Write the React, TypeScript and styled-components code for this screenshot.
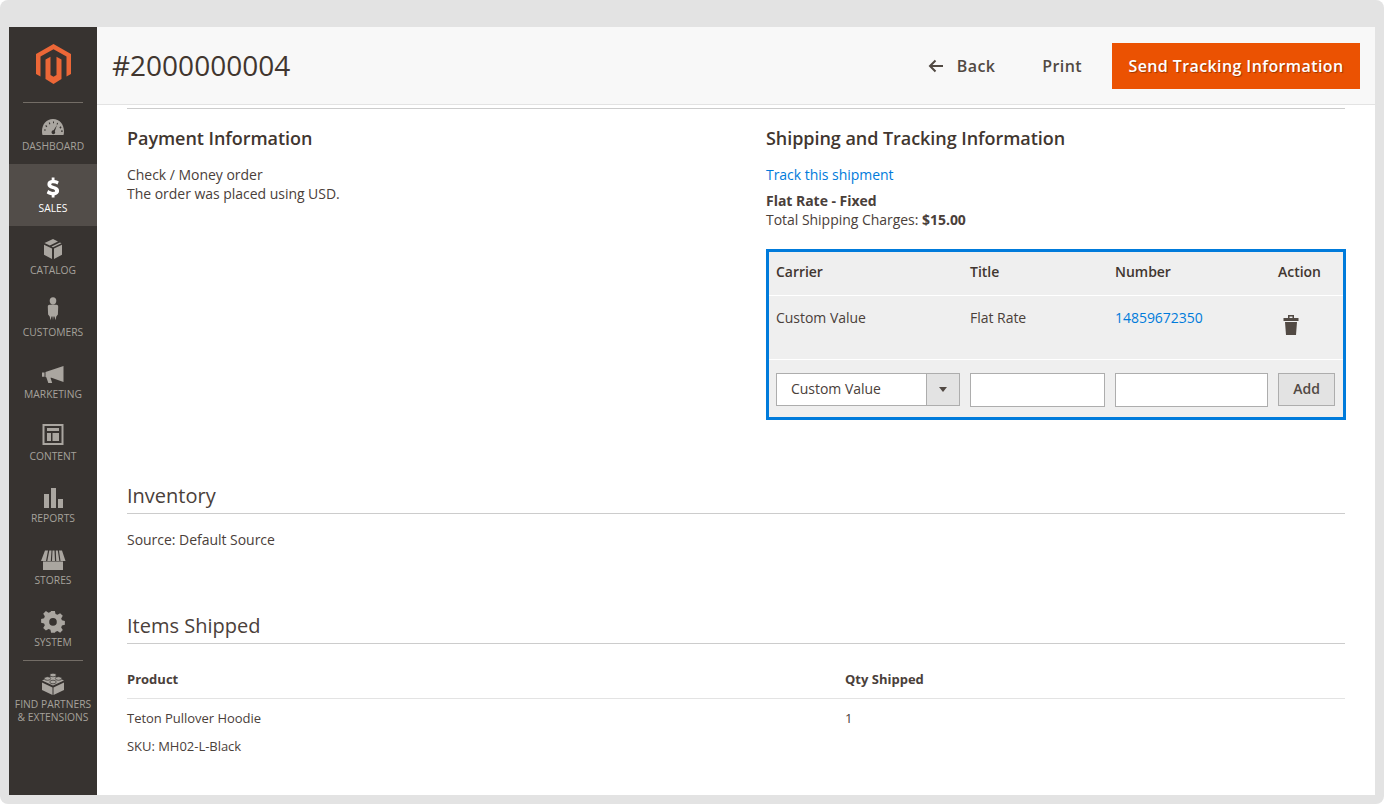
import React from 'react';
import styled, { createGlobalStyle } from 'styled-components';

const GlobalStyle = createGlobalStyle`
  html, body {
    margin: 0;
    padding: 0;
    height: 804px;
    overflow: hidden;
    background: #ffffff;
  }
  * {
    box-sizing: border-box;
  }
`;

const Frame = styled.div`
  width: 1384px;
  height: 804px;
  padding: 27px 9px 9px;
  background: #e3e3e3;
  border-radius: 8px;
  font-family: "Open Sans", "Liberation Sans", sans-serif;
  font-size: 14px;
  letter-spacing: -0.03px;
  color: #4a403a;
`;

const Window = styled.div`
  display: flex;
  height: 768px;
  background: #ffffff;
  overflow: hidden;
`;

const Sidebar = styled.nav`
  flex: 0 0 88px;
  background: #373330;
  display: flex;
  flex-direction: column;
`;

const LogoBox = styled.div`
  height: 75px;
  padding-top: 17px;
  display: flex;
  justify-content: center;
`;

const Divider = styled.div`
  height: 1px;
  margin: 0 14px -1px;
  background: #736d66;
  flex: none;
  position: relative;
`;

const MenuItem = styled.a<{ $active?: boolean }>`
  height: 62px;
  flex: none;
  display: flex;
  flex-direction: column;
  align-items: center;
  padding-top: 10px;
  background: ${(p) => (p.$active ? '#524d49' : 'transparent')};
  color: ${(p) => (p.$active ? '#ffffff' : '#a5a19b')};
  font-size: 10.3px;
  font-weight: 400;
  letter-spacing: 0;
  line-height: 13px;
  text-align: center;
  text-transform: uppercase;
  white-space: nowrap;
`;

const MenuIcon = styled.svg`
  width: 26px;
  height: 24px;
  margin-bottom: 4px;
  fill: #aaa6a0;
  flex: none;
  overflow: visible;
`;

const SalesIcon = styled(MenuIcon)`
  fill: #ffffff;
`;

const Main = styled.div`
  flex: 1;
  display: flex;
  flex-direction: column;
  min-width: 0;
`;

const Header = styled.header`
  height: 78px;
  flex: none;
  background: #f8f8f8;
  border-bottom: 1px solid #e3e3e3;
  display: flex;
  align-items: center;
  padding: 1px 15px 0;
`;

const PageTitle = styled.h1`
  margin: 0 0 2px;
  flex: 1;
  font-size: 28px;
  font-weight: 400;
  letter-spacing: 0;
  line-height: 36px;
  color: #41362f;
`;

const ActionButton = styled.button`
  border: 0;
  background: none;
  padding: 0;
  display: flex;
  align-items: center;
  font-family: inherit;
  font-size: 16px;
  font-weight: 600;
  letter-spacing: 0.4px;
  color: #514943;
`;

const BackButton = styled(ActionButton)`
  margin-right: 47px;
  gap: 13px;
`;

const PrintButton = styled(ActionButton)`
  margin-right: 30px;
`;

const PrimaryButton = styled(ActionButton)`
  width: 248px;
  height: 46px;
  justify-content: center;
  background: #eb5202;
  color: #ffffff;
  text-shadow: 1px 1px 1px rgba(0, 0, 0, 0.35);
`;

const Content = styled.main`
  padding: 3px 30px 0;
`;

const TopRule = styled.div`
  height: 1px;
  background: #cccccc;
`;

const TwoCols = styled.div`
  display: grid;
  grid-template-columns: 639px 580px;
  padding-top: 17px;
  height: 369px;
`;

const BlockTitle = styled.h3`
  margin: 0 0 15px;
  font-size: 18px;
  font-weight: 600;
  letter-spacing: -0.05px;
  line-height: 24px;
  color: #41362f;
`;

const TextLine = styled.div`
  line-height: 19px;
`;

const TrackLink = styled.a`
  display: block;
  color: #007bdb;
  line-height: 19px;
  margin-bottom: 7px;
`;

const TrackingTable = styled.table`
  width: 580px;
  margin-top: 20px;
  border: 3px solid #007bdb;
  border-collapse: separate;
  border-spacing: 0;
  table-layout: fixed;
  background: #efefef;
`;

const HeadCell = styled.th`
  height: 43px;
  padding: 0 5px 5px;
  font-size: 14px;
  font-weight: 600;
  text-align: left;
  color: #41362f;
  &:first-child {
    padding-left: 7px;
  }
`;

const BodyCell = styled.td`
  height: 64px;
  padding: 12px 5px 0;
  vertical-align: top;
  line-height: 19px;
  border-top: 1px solid #ffffff;
  &:first-child {
    padding-left: 7px;
  }
`;

const FormCell = styled.td`
  height: 58px;
  padding: 13px 5px 0;
  vertical-align: top;
  border-top: 1px solid #ffffff;
  &:first-child {
    padding-left: 7px;
  }
`;

const NumberLink = styled.a`
  color: #007bdb;
`;

const TrashIcon = styled.svg`
  display: block;
  width: 16px;
  height: 20px;
  margin: 7px 0 0 5px;
  fill: #514943;
`;

const SelectBox = styled.div`
  display: flex;
  height: 33px;
  border: 1px solid #adadad;
  background: #ffffff;
`;

const SelectValue = styled.div`
  flex: 1;
  padding-left: 14px;
  line-height: 29px;
`;

const SelectArrow = styled.div`
  width: 33px;
  border-left: 1px solid #adadad;
  background: #e3e3e3;
  display: flex;
  align-items: center;
  justify-content: center;
  &::after {
    content: '';
    border-top: 5px solid #514943;
    border-left: 4px solid transparent;
    border-right: 4px solid transparent;
  }
`;

const TextInput = styled.input`
  display: block;
  width: 100%;
  height: 34px;
  border: 1px solid #adadad;
  background: #ffffff;
  padding: 0 8px;
`;

const AddButton = styled.button`
  display: block;
  width: 57px;
  height: 33px;
  padding: 0 0 2px;
  border: 1px solid #adadad;
  background: #e3e3e3;
  font-family: inherit;
  font-size: 14px;
  font-weight: 600;
  color: #514943;
`;

const SectionTitle = styled.h2`
  margin: 0;
  height: 36px;
  padding-top: 4px;
  border-bottom: 1px solid #cccccc;
  font-size: 20px;
  font-weight: 400;
  letter-spacing: 0;
  line-height: 28px;
  color: #4a403a;
`;

const SourceLine = styled.div`
  margin: 16px 0 59px;
  line-height: 19px;
`;

const ItemsTable = styled.div`
  font-size: 13px;
`;

const ItemsHead = styled.div`
  display: grid;
  grid-template-columns: 718px 1fr;
  height: 55px;
  padding-top: 26px;
  line-height: 18px;
  font-weight: 700;
  letter-spacing: 0;
  border-bottom: 1px solid #e3e3e3;
`;

const ItemsRow = styled.div`
  display: grid;
  grid-template-columns: 718px 1fr;
  padding-top: 10px;
  line-height: 18px;
`;

const Sku = styled.div`
  margin-top: 10px;
`;

const menuItems: { label: string; fit: string; icon: React.ReactNode }[] = [
  {
    label: 'Dashboard',
    fit: 'translate(0 4.800) scale(1 1.100)',
    icon: (
      <path
        fillRule="evenodd"
        d="M13 2C6.500 2 2 7 2 13c0 1.800.2 3 .5 3.500h21c.3-.5.5-1.700.5-3.500C24 7 19.500 2 13 2ZM6 7.500l1.300 1.200-.8.8L5.300 8.400ZM9.600 5l.8 1.500-.9.5-.8-1.500ZM13 4.200h1v1.700h-1ZM17.200 5.300l.9.4-.7 1.500-.9-.4ZM4 11.500h1.800v1H4ZM20.500 8.600l1.100 1-1.200 1.200-1-1ZM21 12.500h1.800v1H21ZM17 7.500l-2.200 5.600c.6.7.5 1.800-.2 2.400-.9.7-2.200.5-2.800-.5-.5-.9-.2-2 .7-2.500.4-.2.7-.2 1.100-.2Z"
      />
    ),
  },
  {
    label: 'Sales',
    fit: 'translate(0 1.500)',
    icon: (
      <path d="M11.700 2h2.800v2.500c1.800.2 3.200.7 4.300 1.400l-1.300 3.200c-1.400-.9-2.900-1.400-4.300-1.400-1.300 0-2 .4-2 1.100 0 .8.900 1.100 2.700 1.600 3.300.9 5.200 2.100 5.200 4.900 0 2.500-1.800 4.200-4.600 4.600V22h-2.800v-2.300c-2-.2-3.800-.9-5-1.900l1.500-3.200c1.400 1.100 3.200 1.800 4.800 1.800 1.300 0 2-.4 2-1.200 0-.8-.8-1.200-2.700-1.700C9.300 12.600 7.400 11.400 7.400 8.700c0-2.300 1.700-3.900 4.300-4.200Z" />
    ),
  },
  {
    label: 'Catalog',
    fit: 'translate(0 1.500)',
    icon: (
      <path d="M13 1.500 18 4 9.800 8 4.500 5.600ZM20 5l1.500.8-8.500 4-1.500-.7ZM4 7.200l8 3.800v10.500l-8-4.200ZM22 7.200v10.100l-8 4.200V11Z" />
    ),
  },
  {
    label: 'Customers',
    fit: 'translate(0 -2.500) scale(1 1.100)',
    icon: (
      <path d="M13 1.500a3.300 3.300 0 1 1 0 6.600 3.300 3.300 0 0 1 0-6.600ZM9.500 8.500h7c1 0 1.700.7 1.700 1.700l-.3 7-1.600 1.800-.8 3.500-1-3.500h-1l-.5 3.500-.5-3.500h-1l-1 3.500-.8-3.500-1.600-1.800-.3-7c0-1 .7-1.700 1.700-1.700Z" />
    ),
  },
  {
    label: 'Marketing',
    fit: 'translate(0 3)',
    icon: (
      <path d="M23.500 3v16l-12-4.300-1 .1 1.700 5.200H8.300L6.300 14.300 5.500 14V9l18-6ZM2 9.500h2.500v4.200H2Z" />
    ),
  },
  {
    label: 'Content',
    fit: '',
    icon: (
      <path
        fillRule="evenodd"
        d="M2.500 2h21v21h-21ZM4.500 4v17h17V4ZM7 6h12v3H7ZM7 11h4v8H7ZM12.500 11H19v8h-6.500Z"
      />
    ),
  },
  {
    label: 'Reports',
    fit: 'translate(0 1)',
    icon: <path d="M4 9h5v14H4ZM11 3h5v20h-5ZM18 14h5v9h-5Z" />,
  },
  {
    label: 'Stores',
    fit: '',
    icon: (
      <path d="M5 4.500h3L6 15H1ZM9.300 4.500h2.200L10.800 15H7.300ZM12.500 4.500h2L15 15h-3ZM15.800 4.500h2l1.600 10.500H16.200ZM19 4.500h3L25.500 15h-5ZM3 15.500h20V24H3Z" />
    ),
  },
  {
    label: 'System',
    fit: 'translate(.65 2) scale(.95)',
    icon: (
      <path
        fillRule="evenodd"
        d="M11 1h4l.7 3.200 2 .8 2.800-1.700 2.800 2.800-1.700 2.800.8 2 3.100.7v4l-3.100.7-.8 2 1.700 2.800-2.800 2.800-2.800-1.700-2 .8L15 24h-4l-.7-3.200-2-.8-2.800 1.700-2.800-2.800 1.700-2.800-.8-2-3.100-.7v-4l3.100-.7.8-2-1.700-2.800 2.800-2.800 2.800 1.700 2-.8ZM13 8.500a4 4 0 1 0 0 8 4 4 0 0 0 0-8Z"
      />
    ),
  },
];

const studs = [
  [13, 5],
  [7.5, 8.5],
  [18.5, 8.5],
  [13, 12],
];

export default function App() {
  return (
    <Frame>
      <GlobalStyle />
      <Window>
        <Sidebar>
          <LogoBox>
            <svg width="35" height="40" viewBox="0 0 35 40" fill="#ec6737">
              <path d="M17.500 0 35 10v20l-4.500 2.600v-20l-13-7.400-13 7.400v20L0 30V10Z" />
              <path d="M9.500 15.500l5-2.700V31l3 1.700 3-1.700V12.800l5 2.700V35l-8 5-8-5Z" />
            </svg>
          </LogoBox>
          <Divider />
          {menuItems.map((item) => {
            const active = item.label === 'Sales';
            const Icon = active ? SalesIcon : MenuIcon;
            return (
              <MenuItem key={item.label} $active={active}>
                <Icon viewBox="0 0 26 24">
                  <g transform={item.fit}>{item.icon}</g>
                </Icon>
                {item.label}
              </MenuItem>
            );
          })}
          <Divider />
          <MenuItem>
            <MenuIcon viewBox="0 0 26 24">
              <path d="M13 5.500 24 10.500 13 15.500 2 10.500ZM2 12.500l10.500 5V25L2 20ZM24 12.500l-10.500 5V25L24 20Z" />
              {studs.map(([cx, cy]) => (
                <ellipse key={`${cx}-${cy}`} cx={cx} cy={cy} rx="3.200" ry="1.800" stroke="#373330" strokeWidth=".7" />
              ))}
            </MenuIcon>
            Find Partners
            <br />& Extensions
          </MenuItem>
        </Sidebar>
        <Main>
          <Header>
            <PageTitle>#2000000004</PageTitle>
            <BackButton>
              <svg width="16" height="14" viewBox="0 0 16 14" fill="none" stroke="#514943" strokeWidth="2">
                <path d="M15 7H2M7.500 1.500 2 7l5.500 5.500" />
              </svg>
              Back
            </BackButton>
            <PrintButton>Print</PrintButton>
            <PrimaryButton>Send Tracking Information</PrimaryButton>
          </Header>
          <Content>
            <TopRule />
            <TwoCols>
              <div>
                <BlockTitle>Payment Information</BlockTitle>
                <TextLine>Check / Money order</TextLine>
                <TextLine>The order was placed using USD.</TextLine>
              </div>
              <div>
                <BlockTitle>Shipping and Tracking Information</BlockTitle>
                <TrackLink>Track this shipment</TrackLink>
                <TextLine>
                  <strong>Flat Rate - Fixed</strong>
                </TextLine>
                <TextLine>
                  Total Shipping Charges: <strong>$15.00</strong>
                </TextLine>
                <TrackingTable>
                  <colgroup>
                    <col width="196" />
                    <col width="145" />
                    <col width="163" />
                    <col width="70" />
                  </colgroup>
                  <thead>
                    <tr>
                      <HeadCell>Carrier</HeadCell>
                      <HeadCell>Title</HeadCell>
                      <HeadCell>Number</HeadCell>
                      <HeadCell>Action</HeadCell>
                    </tr>
                  </thead>
                  <tbody>
                    <tr>
                      <BodyCell>Custom Value</BodyCell>
                      <BodyCell>Flat Rate</BodyCell>
                      <BodyCell>
                        <NumberLink>14859672350</NumberLink>
                      </BodyCell>
                      <BodyCell>
                        <TrashIcon viewBox="0 0 16 20">
                          <path
                            fillRule="evenodd"
                            d="M5 0h6v3h4.500v3H.5V3H5ZM6.500 1.500V3h3V1.500ZM2 7h12l-1 13H3Z"
                          />
                        </TrashIcon>
                      </BodyCell>
                    </tr>
                    <tr>
                      <FormCell>
                        <SelectBox>
                          <SelectValue>Custom Value</SelectValue>
                          <SelectArrow />
                        </SelectBox>
                      </FormCell>
                      <FormCell>
                        <TextInput />
                      </FormCell>
                      <FormCell>
                        <TextInput />
                      </FormCell>
                      <FormCell>
                        <AddButton>Add</AddButton>
                      </FormCell>
                    </tr>
                  </tbody>
                </TrackingTable>
              </div>
            </TwoCols>
            <SectionTitle>Inventory</SectionTitle>
            <SourceLine>Source: Default Source</SourceLine>
            <SectionTitle>Items Shipped</SectionTitle>
            <ItemsTable>
              <ItemsHead>
                <div>Product</div>
                <div>Qty Shipped</div>
              </ItemsHead>
              <ItemsRow>
                <div>
                  Teton Pullover Hoodie
                  <Sku>SKU: MH02-L-Black</Sku>
                </div>
                <div>1</div>
              </ItemsRow>
            </ItemsTable>
          </Content>
        </Main>
      </Window>
    </Frame>
  );
}
